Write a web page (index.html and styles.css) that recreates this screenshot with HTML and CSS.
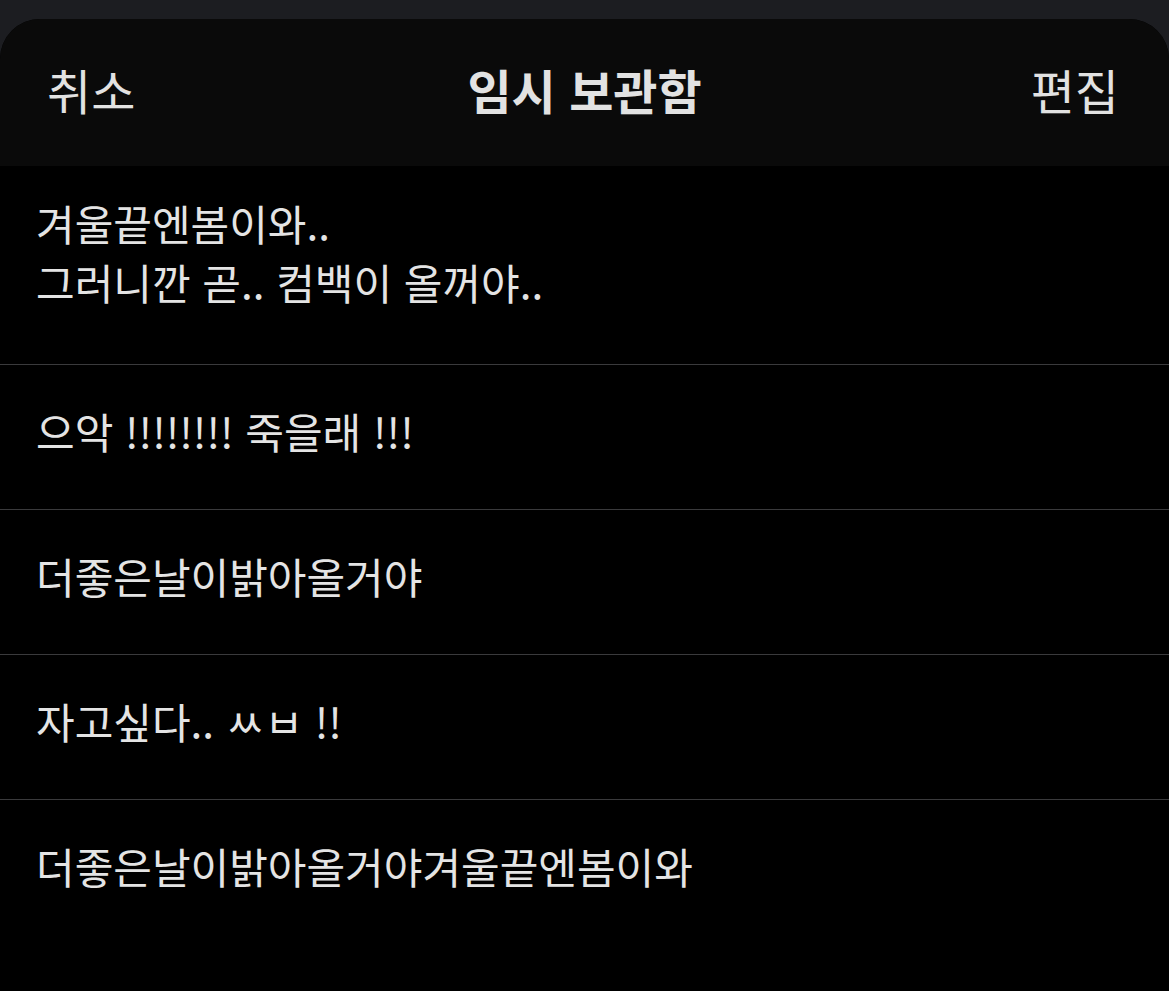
FILE: index.html
```html
<!DOCTYPE html>
<html lang="ko">
<head>
    <meta charset="UTF-8">
    <title>임시 보관함</title>
    <link rel="stylesheet" href="styles.css">
</head>
<body>
    <div class="sheet">
        <div class="header">
            <span class="btn">취소</span>
            <span class="title">임시 보관함</span>
            <span class="btn">편집</span>
        </div>
        <ul class="drafts">
            <li class="first">겨울끝엔봄이와..<br>그러니깐 곧.. 컴백이 올꺼야..</li>
            <li>으악 !!!!!!!! 죽을래 !!!</li>
            <li>더좋은날이밝아올거야</li>
            <li>자고싶다.. ㅆㅂ !!</li>
            <li>더좋은날이밝아올거야겨울끝엔봄이와</li>
        </ul>
    </div>
</body>
</html>
```

FILE: styles.css
```css
html, body {
    margin: 0;
    padding: 0;
}
body {
    background-color: #1c1d21;
    font-family: "Noto Sans CJK KR", "Noto Sans", sans-serif;
    color: #e4e4e4;
    padding-top: 19px;
    height: 972px;
    overflow: hidden;
}
.sheet {
    background-color: #000;
    border-radius: 40px 40px 0 0;
    overflow: hidden;
    height: 100%;
}
.header {
    height: 147px;
    box-sizing: border-box;
    background-color: #0a0a0a;
    display: flex;
    align-items: center;
    justify-content: space-between;
    padding: 0 50px 8px 47px;
    position: relative;
}
.btn {
    font-size: 48px;
    color: #e2e2e2;
}
.title {
    position: absolute;
    left: 0;
    right: 0;
    text-align: center;
    font-size: 48px;
    font-weight: bold;
    color: #e2e2e2;
}
.drafts {
    list-style: none;
    margin: 0;
    padding: 0;
}
.drafts li {
    font-size: 42px;
    line-height: 59px;
    padding: 36px 36px 49px;
    border-bottom: 1px solid #3a3a3c;
}
.drafts li.first {
    padding-top: 27px;
    padding-bottom: 53px;
}
.drafts li:last-child {
    border-bottom: none;
}
```
